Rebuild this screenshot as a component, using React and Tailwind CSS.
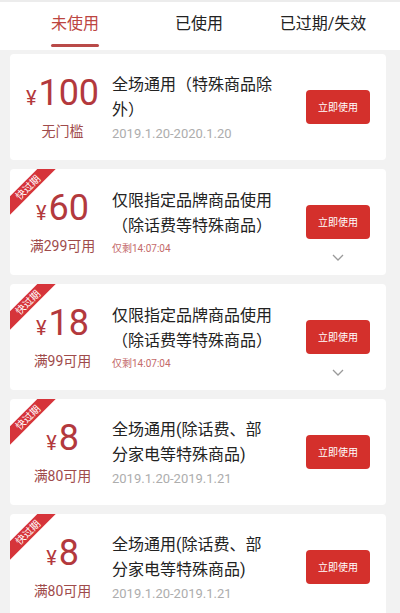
import React from 'react'

const coupons = [
  { amount: '100', cond: '无门槛', title: '全场通用（特殊商品除外）', date: '2019.1.20-2020.1.20' },
  { amount: '60', cond: '满299可用', title: '仅限指定品牌商品使用（除话费等特殊商品）', countdown: '仅剩14:07:04', hot: true },
  { amount: '18', cond: '满99可用', title: '仅限指定品牌商品使用（除话费等特殊商品）', countdown: '仅剩14:07:04', hot: true },
  { amount: '8', cond: '满80可用', title: '全场通用(除话费、部分家电等特殊商品)', date: '2019.1.20-2019.1.21', hot: true },
  { amount: '8', cond: '满80可用', title: '全场通用(除话费、部分家电等特殊商品)', date: '2019.1.20-2019.1.21', hot: true },
]

function Ribbon(){
  return (
    <div className="absolute top-0 left-0 w-[50px] h-[50px] overflow-hidden rounded-tl-[4px]">
      <div className="absolute left-[-22px] top-[12px] w-[80px] h-[13px] -rotate-45 bg-[#d6343a] text-white text-[10px] leading-[13px] text-center">
        快过期
      </div>
    </div>
  )
}

function Coupon({ c }){
  return (
    <div className="relative ml-[10px] w-[376px] h-[106px] shrink-0 rounded-[4px] bg-white flex items-center pr-[16px]">
      {c.hot && <Ribbon />}
      <div className="w-[99px] ml-[3px] flex flex-col items-center text-[#b3393d]">
        <div className="leading-[40px] whitespace-nowrap">
          <span className="text-[20px] leading-none">¥</span>
          <span className="text-[36px] ml-[2px]">{c.amount}</span>
        </div>
        <div className="text-[14px] leading-[22px] text-[#9f4b4b]">{c.cond}</div>
      </div>
      <div className="flex-1">
        <div className="w-[162px] text-[16px] leading-[25px] text-[#222]">{c.title}</div>
        {c.countdown ? (
          <div className="mt-[4px] text-[10px] leading-[14px] text-[#c46a6a]">{c.countdown}</div>
        ) : (
          <div className="mt-[3px] text-[13px] leading-[18px] text-[#adadad]">{c.date}</div>
        )}
      </div>
      <div className="relative">
        <button className="w-[64px] h-[34px] rounded-[4px] bg-[#d4302c] text-white text-[10px]">立即使用</button>
        {c.countdown && (
          <svg className="absolute left-1/2 -translate-x-1/2 top-[49px]" width="12" height="7" viewBox="0 0 12 7" fill="none">
            <polyline points="1,1 6,6 11,1" stroke="#9a9a9a" strokeWidth="1.3" />
          </svg>
        )}
      </div>
    </div>
  )
}

export default function App(){
  const tabs = ['未使用', '已使用', '已过期/失效']
  return (
    <div className="h-[613px] overflow-hidden bg-[#f2f2f2] font-[Roboto,'Noto_Sans_CJK_SC',sans-serif]">
      <div className="h-[50px] bg-white border-t-2 border-[#ececec]">
        <div className="ml-[13px] w-[372px] grid grid-cols-3 h-full">
          {tabs.map((t, i) => (
            <div key={t} className="flex flex-col items-center">
              <div className={'relative pt-[11px] text-[16px] leading-[22px] ' + (i === 0 ? 'text-[#bc4541]' : 'text-[#222]')}>
                {t}
                {i === 0 && <div className="absolute left-0 right-0 top-[42px] h-[3px] bg-[#b94a48] rounded-full"></div>}
              </div>
            </div>
          ))}
        </div>
      </div>
      <div className="flex flex-col gap-[9px] pt-[4px]">
        {coupons.map((c, i) => <Coupon key={i} c={c} />)}
      </div>
    </div>
  )
}
